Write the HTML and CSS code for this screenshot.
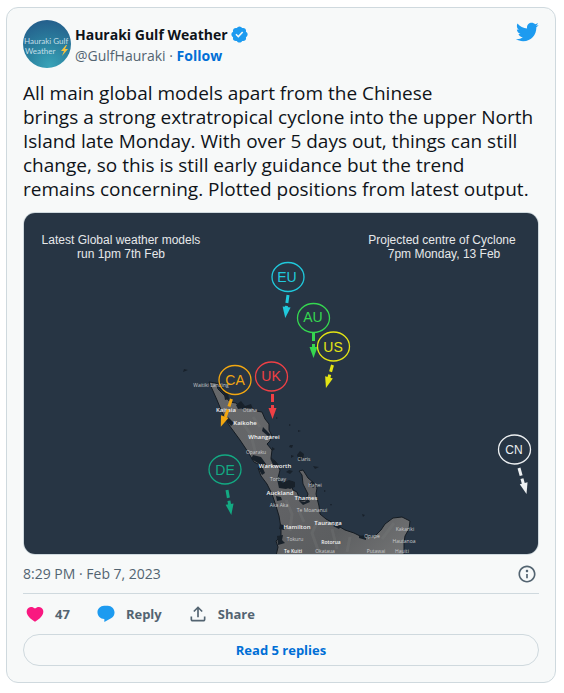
FILE: index.html
```html
<!DOCTYPE html>
<html lang="en">
<head>
<meta charset="utf-8">
<meta name="viewport" content="width=device-width, initial-scale=1">
<title>Hauraki Gulf Weather</title>
<link rel="stylesheet" href="styles.css">
</head>
<body>
<article class="card">
  <header class="header">
    <svg class="avatar" viewBox="0 0 48 48" role="img" aria-label="Hauraki Gulf Weather logo">
      <defs>
        <radialGradient id="sea" cx=".55" cy=".95" r=".95"><stop offset="0" stop-color="#39a3b8"/><stop offset=".5" stop-color="#2b819f"/><stop offset="1" stop-color="#245f8c"/></radialGradient>
        <clipPath id="round"><circle cx="24" cy="24" r="24"/></clipPath>
      </defs>
      <g clip-path="url(#round)">
        <path fill="url(#sea)" d="M0 0h48v48H0z"/>
        <text class="avatar-text" x="1" y="24">Hauraki Gulf</text>
        <text class="avatar-text" x="2" y="34">Weather</text>
        <path fill="#f6c340" d="M43 25l-5 6h3l-2 5 6-7h-3l2-4z"/>
      </g>
    </svg>
    <div class="author">
      <div class="name">Hauraki Gulf Weather
        <svg class="verified" viewBox="0 0 24 24" role="img" aria-label="Verified"><path d="M22.25 12c0-1.43-.88-2.67-2.19-3.34.46-1.39.2-2.9-.81-3.91s-2.52-1.27-3.91-.81c-.66-1.31-1.91-2.19-3.34-2.19s-2.67.88-3.33 2.19c-1.4-.46-2.91-.2-3.92.81s-1.26 2.52-.8 3.91c-1.31.67-2.2 1.91-2.2 3.34s.89 2.67 2.2 3.34c-.46 1.39-.21 2.9.8 3.91s2.52 1.26 3.91.81c.67 1.31 1.91 2.19 3.34 2.19s2.68-.88 3.34-2.19c1.39.45 2.9.2 3.91-.81s1.27-2.52.81-3.91c1.31-.67 2.19-1.91 2.19-3.34zm-11.71 4.2L6.8 12.46l1.41-1.42 2.26 2.26 4.8-5.23 1.47 1.36-6.2 6.77z"/></svg>
      </div>
      <div class="handle">@GulfHauraki · <a class="follow" href="#">Follow</a></div>
    </div>
    <svg class="bird" viewBox="0 0 24 24" role="img" aria-label="Twitter"><path d="M23.643 4.937c-.835.37-1.732.62-2.675.733.962-.576 1.7-1.49 2.048-2.578-.9.534-1.897.922-2.958 1.13-.85-.904-2.06-1.47-3.4-1.47-2.572 0-4.658 2.086-4.658 4.66 0 .364.042.718.12 1.06-3.873-.195-7.304-2.05-9.602-4.868-.4.69-.63 1.49-.63 2.342 0 1.616.823 3.043 2.072 3.878-.764-.025-1.482-.234-2.11-.583v.06c0 2.257 1.605 4.14 3.737 4.568-.392.106-.803.162-1.227.162-.3 0-.593-.028-.877-.082.593 1.85 2.313 3.198 4.352 3.234-1.595 1.25-3.604 1.995-5.786 1.995-.376 0-.747-.022-1.112-.065 2.062 1.323 4.51 2.093 7.14 2.093 8.57 0 13.255-7.098 13.255-13.254 0-.2-.005-.402-.014-.602.91-.658 1.7-1.477 2.323-2.41z"/></svg>
  </header>

  <p class="text">All main global models apart from the Chinese<br>brings a strong extratropical cyclone into the upper North Island late Monday. With over 5 days out, things can still change, so this is still early guidance but the trend remains concerning. Plotted positions from latest output.</p>

  <svg class="map" viewBox="24 213 514 341" role="img" aria-label="Projected cyclone positions north of New Zealand">
    <defs>
      <linearGradient id="land" x1="0" y1="0" x2="1" y2="1"><stop offset="0" stop-color="#66686a"/><stop offset=".5" stop-color="#626366"/><stop offset=".75" stop-color="#5c5e60"/><stop offset="1" stop-color="#747576"/></linearGradient>
      <path id="head" d="M-4 -9L4 -9L0 2Z"/>
    </defs>
    <path fill="#273544" d="M23 212h516v343H23z"/>
    <path class="land" fill="url(#land)" d="M209 382L216 383L218 389L224 395L230 402L236 403L243 409L250 407L256 411L262 412L265 419L269 424L269 430L272 436L270 441L267 444L272 450L271 458L276 462L280 470L278 478L281 484L291 484L293 490L297 492L300 501L306 500L308 494L303 484L302 475L299 471L303 470L308 478L314 483L317 488L316 494L319 506L320 514L326 519L335 524L345 530L354 533L362 537L374 537L381 530L385 524L393 518L402 517L410 521L409 529L405 536L404 543V556H276L278 547L276 541L281 536L281 528L279 516L276 506L272 494L267 484L261 476L258 468L262 466L254 462L248 452L240 440L229 425L222 412L217 400Z"/>
    <g class="inlets">
      <path d="M216 383l3 6 5 5 1 6 4-1-1-6-4-3-4-8zM228 417l6 6-3 3-5-6zM253 455l8 2 5 7-2 4-6-5-7-4zM261 464l4 9-3 2-4-7zM277 479l6 4 10-2 1 5-8 3-7-1zM276 496l5 1 1 3-5 1zM280 524l6 2-2 4-5-1zM277 536l6-1-1 5 3 3-7 2z"/>
      <path d="M299 501l6 1 3-4 2 4-7 3zM312 481l4 5-3 2-4-4zM335 525l6 1-2 3-6-3zM359 536l7-1 0 5-7-2zM236 405l5-4 4 5 6-2 2 5-8-1-7 1zM263 427l3 3 5 5-3 1-6-5zM270 458l5 3 4 4-6 0z"/>
      <path d="M300 451l4 3-1 6-4 1-2-6zM290 445l3 0-1 3-3-1zM291 455l3 1-3 2zM313 466l6 1-4 2zM324 490l2 1-2 1zM330 504l2 0-1 2zM362 514l3 1-2 2zM289 424l2 1-2 1zM298 430l3 1-3 1zM184 369l4 1-5 2zM276 417l2 1-2 1zM284 482l5-2 6 2 0 5-5 2-5-2zM272 447l3 2-3 2zM289 470l4 1-3 3-4-2z"/>
    </g>
    <g class="terrain">
      <path d="M242 422l9 13 4 16M260 427l-7-10M286 500l6 14-2 17M318 520l-6 13 6 17M350 537l-3 15M332 529l5 20M394 523l-12 16M299 511l5 11"/>
    </g>

    <g class="place minor">
      <text x="211" y="387">Waitiki Landing</text><text x="250" y="412">Otaha</text><text x="256" y="454">Oparaku</text>
      <text x="304" y="461">Claris</text><text x="278" y="481">Torbay</text><text x="315" y="487">Hahei</text><text x="279" y="507">Aka Aka</text>
      <text x="312" y="512">Te Moananui</text><text x="295" y="541">Tokuru</text><text x="372" y="538">Opape</text><text x="405" y="531">Kakariki</text>
      <text x="404" y="543">Hautanoa</text><text x="376" y="553">Putawai</text><text x="402" y="553">Hauiti</text><text x="325" y="553">Okataua</text>
    </g>
    <g class="place">
      <text x="226" y="412">Kaitaia</text><text x="245" y="425">Kaikohe</text><text x="264" y="439">Whangarei</text><text x="275" y="468">Warkworth</text>
      <text x="280" y="495">Auckland</text><text x="306" y="500">Thames</text><text x="297" y="529">Hamilton</text><text x="328" y="525">Tauranga</text>
    </g>
    <g class="place town">
      <text x="331" y="544">Rotorua</text><text x="293" y="553">Te Kuiti</text>
    </g>

    <g class="caption">
      <text x="121" y="244">Latest Global weather models</text><text x="121" y="258">run 1pm 7th Feb</text>
      <text x="442" y="244">Projected centre of Cyclone</text><text x="444" y="258">7pm Monday, 13 Feb</text>
    </g>

    <g class="model eu"><ellipse cx="288" cy="277" rx="16" ry="14.5"/><text x="287" y="282">EU</text><path d="M288 295L286 309" stroke-dasharray="8 3"/><use href="#head" transform="translate(285.5 316) rotate(7)"/></g>
    <g class="model au"><ellipse cx="313.5" cy="318" rx="16" ry="14.5"/><text x="313" y="322">AU</text><path d="M313.5 333V350" stroke-dasharray="8 3"/><use href="#head" transform="translate(313.5 356)"/></g>
    <g class="model us"><ellipse cx="333.5" cy="346.5" rx="16" ry="14.5"/><text x="333" y="352">US</text><path d="M332.5 365L328.5 379" stroke-dasharray="7 3"/><use href="#head" transform="translate(326.5 386) rotate(16)"/></g>
    <g class="model uk"><ellipse cx="271.5" cy="376.5" rx="16" ry="14.5"/><text x="271" y="381">UK</text><path d="M272.5 394V411" stroke-dasharray="8 3"/><use href="#head" transform="translate(272.5 417)"/></g>
    <g class="model ca"><ellipse cx="235" cy="380" rx="16" ry="14.5"/><text x="235" y="385">CA</text><path d="M231.5 399L225 418" stroke-dasharray="8 3"/><use href="#head" transform="translate(221.5 425) rotate(21)"/></g>
    <g class="model de"><ellipse cx="225" cy="469.5" rx="16" ry="14.5"/><text x="225" y="475">DE</text><path d="M227 490L230 507" stroke-dasharray="8 3"/><use href="#head" transform="translate(231 513) rotate(-9)"/></g>
    <g class="model cn"><ellipse cx="514.5" cy="449.5" rx="16" ry="14.5"/><text class="small" x="514" y="454">CN</text><path d="M519 468L524 486" stroke-dasharray="8 3"/><use href="#head" transform="translate(526 492) rotate(-15)"/></g>
  </svg>

  <div class="meta">
    <time datetime="2023-02-07T20:29">8:29 PM · Feb 7, 2023</time>
    <a class="info" href="#" aria-label="Information"><svg class="icon" viewBox="0 0 24 24"><path d="M13.5 8.5c0 .83-.67 1.5-1.5 1.5s-1.5-.67-1.5-1.5S11.17 7 12 7s1.5.67 1.5 1.5zM13 17v-5h-2v5h2zm-1 5.25c5.66 0 10.25-4.59 10.25-10.25S17.66 1.75 12 1.75 1.75 6.34 1.75 12 6.34 22.25 12 22.25zM20.25 12c0 4.56-3.69 8.25-8.25 8.25S3.75 16.56 3.75 12 7.44 3.75 12 3.75s8.25 3.69 8.25 8.25z"/></svg></a>
  </div>

  <div class="actions">
    <button class="action like" type="button"><svg class="icon" viewBox="0 0 24 24"><path d="M20.884 13.19c-1.351 2.48-4.001 5.12-8.379 7.67l-.503.3-.504-.3c-4.379-2.55-7.029-5.19-8.382-7.67-1.36-2.5-1.41-4.86-.514-6.67.887-1.79 2.647-2.91 4.601-3.01 1.651-.09 3.368.56 4.798 2.01 1.429-1.45 3.146-2.1 4.796-2.01 1.954.1 3.714 1.22 4.601 3.01.896 1.81.846 4.17-.514 6.67z"/></svg>47</button>
    <button class="action reply" type="button"><svg class="icon" viewBox="0 0 24 24"><path d="M1.751 10c0-4.42 3.584-8 8.005-8h4.366c4.49 0 8.129 3.64 8.129 8.13 0 2.96-1.607 5.68-4.196 7.11l-8.054 4.46v-3.69h-.067c-4.49.1-8.183-3.51-8.183-8.01z"/></svg>Reply</button>
    <button class="action" type="button"><svg class="icon" viewBox="0 0 24 24"><path d="M12 2.59l5.7 5.7-1.41 1.42L13 6.41V16h-2V6.41l-3.3 3.3-1.41-1.42L12 2.59zM21 15l-.02 3.51c0 1.38-1.12 2.49-2.5 2.49H5.5C4.11 21 3 19.88 3 18.5V15h2v3.5c0 .28.22.5.5.5h12.98c.28 0 .5-.22.5-.5L19 15h2z"/></svg>Share</button>
  </div>
  <a class="read" href="#">Read 5 replies</a>
</article>
</body>
</html>
```
FILE: styles.css
```css
* { box-sizing: border-box; }

body {
  margin: 7px 8px 8px 6px;
  background: #fff;
  color: #0f1419;
  font-family: "Open Sans", "Noto Sans", sans-serif;
}

a { color: #006fd6; text-decoration: none; }

.card {
  padding: 12px 16px 16px;
  border: 1px solid #cfd9de;
  border-radius: 12px;
  background: #f7f9f9;
}

.header { display: flex; align-items: flex-start; }
.avatar { width: 48px; height: 48px; flex: none; }
.avatar-text { fill: #c3dfe8; font: 8px Lato, sans-serif; }
.author {
  flex: 1;
  padding: 4px 0 0 4px;
  font-size: 14px;
  line-height: 21px;
}
.name { display: flex; align-items: center; gap: 2px; font-weight: 700; }
.verified { width: 19px; height: 19px; fill: #1d9bf0; }
.handle { color: #536471; }
.follow { font-weight: 700; }
.bird { width: 24px; height: 24px; fill: #1d9bf0; }

.text {
  margin: 13px 0 11px;
  font-size: 19px;
  line-height: 24px;
}

.map {
  display: block;
  width: 100%;
  border: 1px solid #cfd9de;
  border-radius: 12px;
}
.land { stroke: #141b22; stroke-width: 1; }
.inlets { fill: #18212a; }
.terrain { fill: none; stroke: #77797b; stroke-width: 3; opacity: .3; }
.place { fill: #f2f2f2; font: 600 6px "Open Sans", sans-serif; text-anchor: middle; }
.minor { fill: #c9cbcd; font-weight: 400; font-size: 5px; }
.town { font-size: 5px; }
.caption { fill: #e6e8ea; font: 12px "Liberation Sans", sans-serif; text-anchor: middle; }

.model { fill: currentColor; stroke: currentColor; }
.model ellipse { fill: none; stroke-width: 1.3; }
.model path { stroke-width: 3; }
.model use { stroke: none; }
.model text { stroke: none; font: 14px "Liberation Sans", sans-serif; text-anchor: middle; }
.model .small { font-size: 12px; }
.eu { color: #20c9dc; }
.au { color: #35d750; }
.us { color: #e4e514; }
.uk { color: #f04045; }
.ca { color: #f2a711; }
.de { color: #13aa83; }
.cn { color: #edf0f2; }

.icon { width: 20px; height: 20px; flex: none; fill: currentColor; }
.meta {
  display: flex;
  align-items: center;
  justify-content: space-between;
  height: 39px;
  padding-bottom: 1px;
  border-bottom: 1px solid #cfd9de;
  color: #536471;
  font-size: 14px;
}
.info { display: flex; padding-right: 2px; color: #536471; }

.actions { display: flex; gap: 26px; padding: 10px 0 10px 2px; }
.action {
  display: flex;
  align-items: center;
  gap: 10px;
  padding: 0;
  border: 0;
  background: none;
  color: #536471;
  font: 700 13px/20px "Open Sans", sans-serif;
}
.like .icon { color: #f91880; }
.reply .icon { color: #1d9bf0; }

.read {
  display: block;
  border: 1px solid #cfd9de;
  border-radius: 16px;
  font-size: 13px;
  font-weight: 700;
  line-height: 30px;
  text-align: center;
}
```
